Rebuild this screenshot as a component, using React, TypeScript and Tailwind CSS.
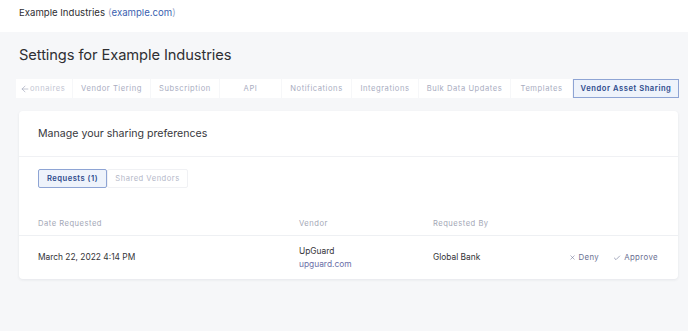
import { X, Check, ArrowLeft } from 'lucide-react';

const tabs = [
  { label: 'Vendor Tiering', w: 'w-[77px]' },
  { label: 'Subscription', w: 'w-[68px]' },
  { label: 'API', w: 'w-[61px]' },
  { label: 'Notifications', w: 'w-[69px]' },
  { label: 'Integrations', w: 'w-[66px]' },
  { label: 'Bulk Data Updates', w: 'w-[91px]' },
  { label: 'Templates', w: 'w-[61px]' },
];

export default function App() {
  return (
    <div className="w-full min-h-[331px] bg-[#f6f7f9] text-[#333] font-['Inter',sans-serif] overflow-hidden">
      {/* Top bar */}
      <div className="h-[32px] bg-white flex items-center pb-[6px] px-[19px] text-[9.6px]">
        <span className="text-[#2e2e32]">Example Industries</span>
        <span className="ml-[3px] text-[#9aa7c8]">(</span>
        <span className="text-[#3a5fb0]">example.com</span>
        <span className="text-[#9aa7c8]">)</span>
      </div>

      <div className="px-[19px]">
        <h1 className="mt-[13px] h-[20px] leading-[20px] text-[14.7px] tracking-[-0.1px] text-[#2f2f33]">
          Settings for Example Industries
        </h1>

        {/* Settings tabs (scrolled: first tab partly hidden behind the back arrow) */}
        <div className="mt-[14px] -ml-[3px] flex items-stretch gap-[1px] h-[19px] text-[7.6px] tracking-[0.55px] text-[#a9adbf]">
          <div className="shrink-0 w-[56px] bg-white flex items-center pl-[4px]">
            <ArrowLeft size={10} strokeWidth={1.5} className="text-[#9ea3b8] shrink-0" />
            <span className="whitespace-nowrap text-[#c3c6d3]">onnaires</span>
          </div>
          {tabs.map(t => (
            <div key={t.label} className={`${t.w} shrink-0 bg-white flex items-center justify-center whitespace-nowrap`}>
              {t.label}
            </div>
          ))}
          <div className="w-[106px] shrink-0 bg-[#eef3fb] border border-[#8ea4d4] flex items-center justify-center whitespace-nowrap font-semibold text-[#2c4a8c]">
            Vendor Asset Sharing
          </div>
        </div>

        {/* Card */}
        <div className="mt-[13px] w-[659px] bg-white rounded-[4px] shadow-[0_1px_3px_rgba(30,40,70,0.08)]">
          <div className="h-[46px] flex items-center px-[19px] border-b border-[#f0f1f4] text-[10.6px] text-[#38383d]">
            Manage your sharing preferences
          </div>

          <div className="px-[19px] pt-[12px] flex text-[7.6px] tracking-[0.5px]">
            <div className="w-[69px] h-[19px] flex items-center justify-center bg-[#eef3fb] border border-[#8ea4d4] rounded-[2px] font-semibold text-[#2c4a8c]">
              Requests (1)
            </div>
            <div className="w-[81px] h-[19px] flex items-center justify-center border border-[#f0f1f4] rounded-[2px] text-[#b4b8c8]">
              Shared Vendors
            </div>
          </div>

          {/* Table header */}
          <div className="mt-[24px] h-[24px] flex items-center px-[19px] border-b border-[#eef0f3] text-[7.6px] tracking-[0.5px] text-[#a3a7b6]">
            <div className="w-[261px]">Date Requested</div>
            <div className="w-[134px]">Vendor</div>
            <div>Requested By</div>
          </div>

          {/* Row */}
          <div className="h-[43px] flex items-center px-[19px] text-[8.4px] text-[#333337]">
            <div className="w-[261px]">March 22, 2022 4:14 PM</div>
            <div className="w-[134px] flex flex-col leading-[13px]">
              <span>UpGuard</span>
              <span className="text-[#6b70a8]">upguard.com</span>
            </div>
            <div className="flex-1">Global Bank</div>
            <div className="flex items-center gap-[14px] pr-[1px] text-[7.8px] tracking-[0.4px] text-[#6a7092]">
              <span className="flex items-center gap-[3px]">
                <X size={7} strokeWidth={1.8} />
                Deny
              </span>
              <span className="flex items-center gap-[3px]">
                <Check size={8} strokeWidth={1.8} />
                Approve
              </span>
            </div>
          </div>
        </div>
      </div>
    </div>
  );
}
